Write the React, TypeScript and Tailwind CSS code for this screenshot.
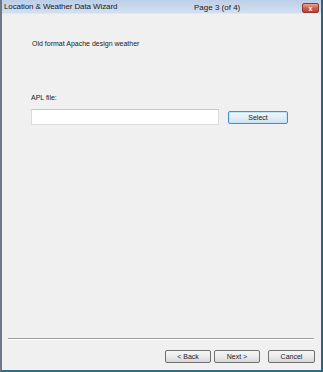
export default function App() {
  return (
    <div
      className="w-[323px] h-[372px] flex flex-col bg-[#f0f0f0] border-l-2 border-l-[#6e7784] border-r-2 border-r-[#2c6478] border-b-2 border-b-[#2c6f86] overflow-hidden"
      style={{ fontFamily: '"Liberation Sans", Arial, sans-serif' }}
    >
      {/* Title bar */}
      <div className="relative h-[14px] shrink-0 bg-gradient-to-b from-[#bccfe8] to-[#d2e0f1] border-b border-b-[#dfe8f3] flex items-center text-[8px] text-[#1a1a1a]">
        <span className="pl-[2px] tracking-[-0.1px]">Location &amp; Weather Data Wizard</span>
        <span className="absolute left-[192px] top-[2px]">Page 3 (of 4)</span>
        <div className="absolute left-[300px] top-[3px] w-[17px] h-[10px] rounded-[2px] border border-[#8a3a2c] bg-gradient-to-b from-[#e9a793] via-[#d2604a] to-[#c0402a] flex items-center justify-center">
          <span className="text-white text-[7px] leading-none font-bold">x</span>
        </div>
      </div>

      {/* Body */}
      <div className="flex-1 flex flex-col">
        <div className="pl-[30px] pt-[26px] text-[7px] leading-[8px] text-[#1a1a1a]">
          Old format Apache design weather
        </div>

        <div className="pl-[29px] mt-[46px] text-[7px] leading-[8px] text-[#1a1a1a]">APL file:</div>

        <div className="flex items-center pl-[29px] mt-[7px]">
          <div className="w-[188px] h-[16px] bg-white border border-[#dcdcdc] border-t-[#c8c8c8]" />
          <button className="ml-[9px] w-[60px] h-[13px] rounded-[2px] border border-[#4a8fc2] bg-gradient-to-b from-[#f3f8fb] via-[#e4eef6] to-[#cfe0ee] text-[7px] leading-none text-[#1a1a1a] shadow-[inset_0_0_0_1px_#bfe3f7]">
            Select
          </button>
        </div>

        <div className="flex-1" />

        <div className="ml-[6px] mr-[7px] h-[2px] border-t border-t-[#a0a0a0] border-b border-b-white" />

        <div className="flex justify-end gap-[3px] pr-[6px] pt-[10px] pb-[7px]">
          <button className="w-[46px] h-[13px] rounded-[2px] border border-[#707070] bg-gradient-to-b from-[#f5f5f5] via-[#ebebeb] to-[#d6d6d6] text-[7px] leading-none text-[#1a1a1a]">
            &lt; Back
          </button>
          <button className="w-[46px] h-[13px] rounded-[2px] border border-[#707070] bg-gradient-to-b from-[#f5f5f5] via-[#ebebeb] to-[#d6d6d6] text-[7px] leading-none text-[#1a1a1a]">
            Next &gt;
          </button>
          <button className="ml-[5px] w-[47px] h-[13px] rounded-[2px] border border-[#707070] bg-gradient-to-b from-[#f5f5f5] via-[#ebebeb] to-[#d6d6d6] text-[7px] leading-none text-[#1a1a1a]">
            Cancel
          </button>
        </div>
      </div>
    </div>
  )
}
